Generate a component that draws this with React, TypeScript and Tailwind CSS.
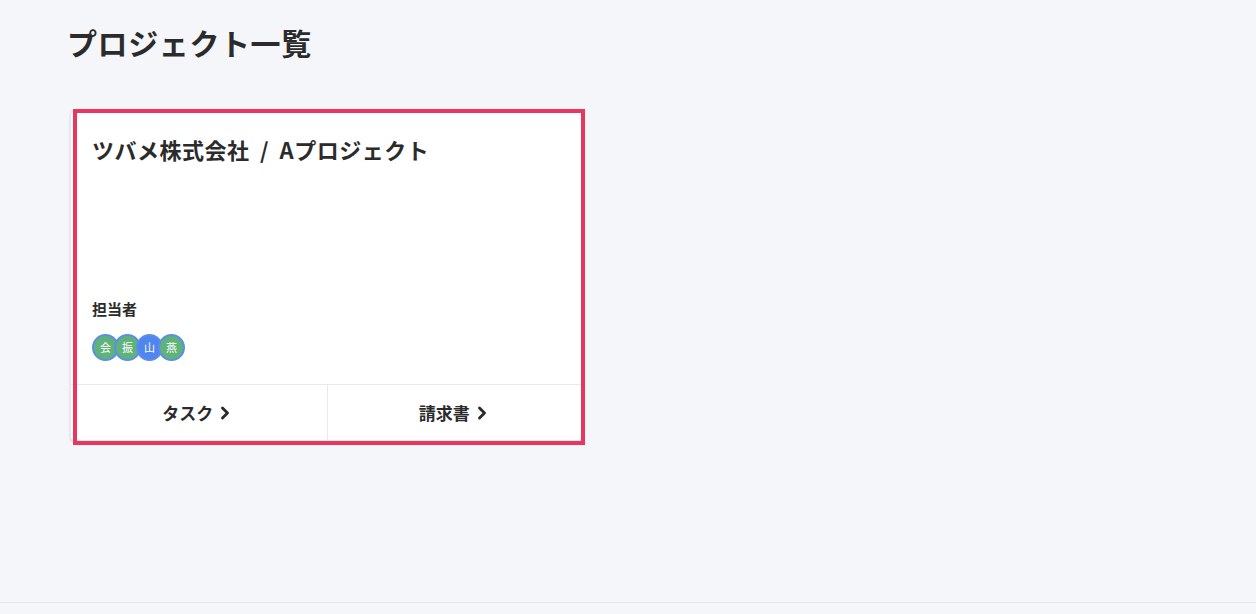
import React from 'react';
import { ChevronRight } from 'lucide-react';

const members = [
  { name: '会', color: 'bg-[#5fb27a]' },
  { name: '振', color: 'bg-[#5fb27a]' },
  { name: '山', color: 'bg-[#4f86ee]' },
  { name: '燕', color: 'bg-[#5fb27a]' },
];

export default function App() {
  return (
    <div
      className="h-[614px] flex flex-col bg-[#f5f6fa] text-[#2b2b2b]"
      style={{ fontFamily: '"Noto Sans CJK JP", "Noto Sans", sans-serif' }}
    >
      <main className="flex-1 px-[67px] pt-[21px]">
        <h1 className="text-[30px] leading-[42px] font-bold tracking-[0.6px]">プロジェクト一覧</h1>

        <div className="relative mt-[48px] ml-[3px] w-[514px]">
          <div className="h-[330px] flex flex-col bg-white rounded border border-[#e6e7ee] shadow-sm">
            <div className="flex-1 flex flex-col px-[21px] pt-[21px] pb-[23px]">
              <h2 className="text-[22px] leading-[32px] font-bold tracking-[0.5px] whitespace-pre">
                ツバメ株式会社<span className="px-[5px]"> / </span>Aプロジェクト
              </h2>
              <div className="flex-1" />
              <p className="text-[15px] leading-[20px] font-bold">担当者</p>
              <div className="flex mt-[15px]">
                {members.map((m, i) => (
                  <div
                    key={m.name}
                    className={`w-[27px] h-[27px] rounded-full border-2 border-[#5b8ee8] ${m.color} text-white text-[11px] flex items-center justify-center ${i > 0 ? '-ml-[5px]' : ''}`}
                  >
                    {m.name}
                  </div>
                ))}
              </div>
            </div>
            <div className="flex border-t border-[#e8e8f0] h-[56px]">
              <button className="flex-1 flex items-center justify-center gap-[2px] text-[17px] font-bold border-r border-[#e8e8f0]">
                タスク <ChevronRight size={20} strokeWidth={3.5} />
              </button>
              <button className="flex-1 flex items-center justify-center gap-[2px] text-[17px] font-bold">
                請求書 <ChevronRight size={20} strokeWidth={3.5} />
              </button>
            </div>
          </div>
          <div className="absolute left-[3px] top-[-2px] w-[512px] h-[336px] border-4 border-[#e8365f] pointer-events-none" />
        </div>
      </main>
      <footer className="h-[12px] border-t border-[#e4e6ec]" />
    </div>
  );
}
